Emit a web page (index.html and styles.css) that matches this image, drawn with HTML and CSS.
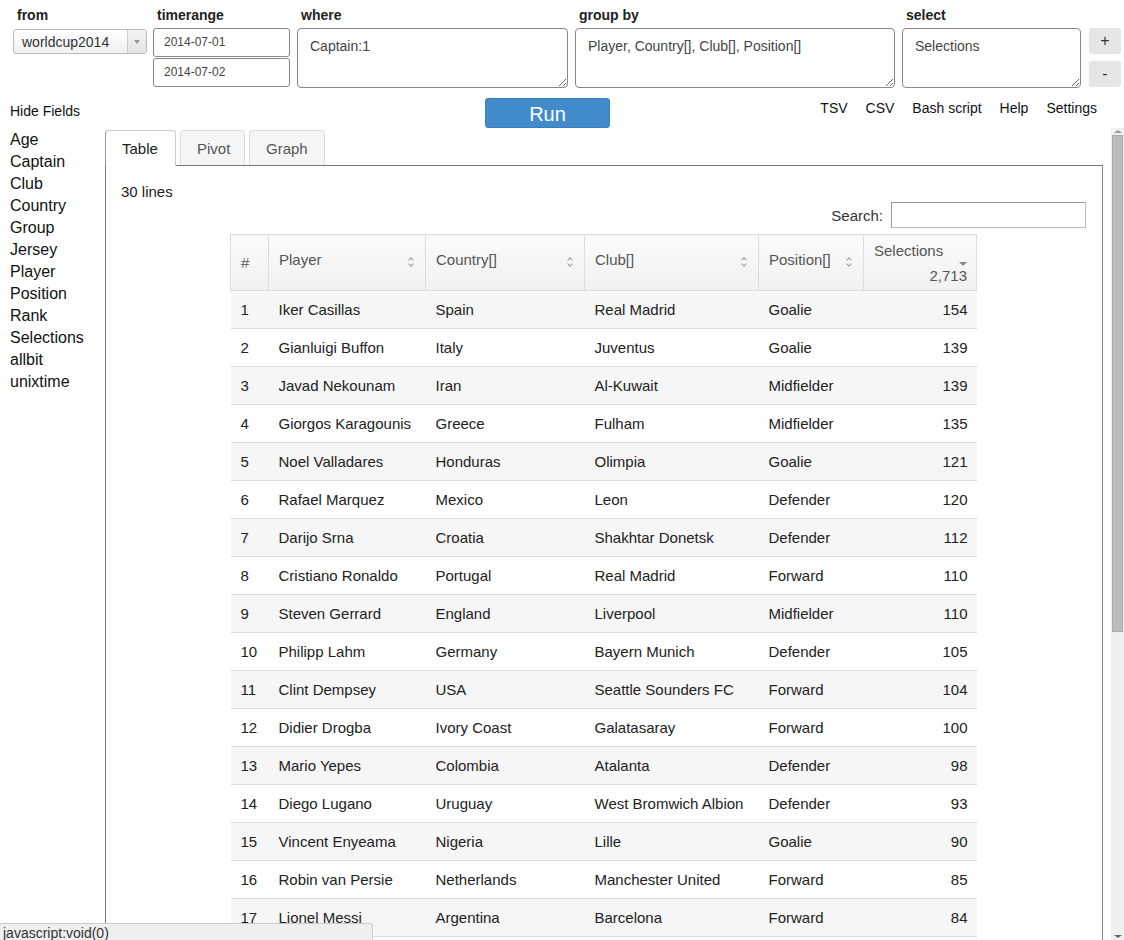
FILE: index.html
```html
<!DOCTYPE html>
<html>
<head>
<meta charset="utf-8">
<link rel="stylesheet" href="styles.css">
</head>
<body>
<div class="query">
  <div class="field f-from">
    <div class="lbl">from</div>
    <div class="select-box"><span class="sel-text">worldcup2014</span><span class="sel-arrow"><i></i></span></div>
  </div>
  <div class="field f-time">
    <div class="lbl">timerange</div>
    <div class="date">2014-07-01</div>
    <div class="date">2014-07-02</div>
  </div>
  <div class="field f-where">
    <div class="lbl">where</div>
    <textarea class="ta">Captain:1</textarea>
  </div>
  <div class="field f-group">
    <div class="lbl">group by</div>
    <textarea class="ta">Player, Country[], Club[], Position[]</textarea>
  </div>
  <div class="field f-select">
    <div class="lbl">select</div>
    <textarea class="ta">Selections</textarea>
  </div>
  <div class="pm">
    <div class="pmbtn">+</div>
    <div class="pmbtn">-</div>
  </div>
</div>

<div class="bar">
  <div class="hide">Hide Fields</div>
  <div class="run">Run</div>
  <div class="links">
    <span>TSV</span><span>CSV</span><span>Bash script</span><span>Help</span><span>Settings</span>
  </div>
</div>

<div class="main">
  <ul class="fields">
    <li>Age</li><li>Captain</li><li>Club</li><li>Country</li><li>Group</li><li>Jersey</li><li>Player</li><li>Position</li><li>Rank</li><li>Selections</li><li>allbit</li><li>unixtime</li>
  </ul>
  <div class="scrollarea">
    <div class="content">
      <div class="tabs">
        <div class="tab active">Table</div>
        <div class="tab">Pivot</div>
        <div class="tab">Graph</div>
      </div>
      <div class="panel">
        <div class="lines">30 lines</div>
        <div class="search"><span>Search:</span><div class="sinput"></div></div>
        <table class="grid">
          <colgroup>
            <col style="width:38px"><col style="width:157px"><col style="width:159px"><col style="width:174px"><col style="width:105px"><col style="width:113px">
          </colgroup>
          <thead>
            <tr>
              <th class="num">#</th>
              <th><div class="th">Player<span class="sort"></span></div></th>
              <th><div class="th">Country[]<span class="sort"></span></div></th>
              <th><div class="th">Club[]<span class="sort"></span></div></th>
              <th><div class="th">Position[]<span class="sort"></span></div></th>
              <th class="selth"><div class="sel-name">Selections</div><span class="desc"></span><div class="total">2,713</div></th>
            </tr>
          </thead>
          <tbody>
            <tr><td>1</td><td>Iker Casillas</td><td>Spain</td><td>Real Madrid</td><td>Goalie</td><td class="r">154</td></tr>
            <tr><td>2</td><td>Gianluigi Buffon</td><td>Italy</td><td>Juventus</td><td>Goalie</td><td class="r">139</td></tr>
            <tr><td>3</td><td>Javad Nekounam</td><td>Iran</td><td>Al-Kuwait</td><td>Midfielder</td><td class="r">139</td></tr>
            <tr><td>4</td><td>Giorgos Karagounis</td><td>Greece</td><td>Fulham</td><td>Midfielder</td><td class="r">135</td></tr>
            <tr><td>5</td><td>Noel Valladares</td><td>Honduras</td><td>Olimpia</td><td>Goalie</td><td class="r">121</td></tr>
            <tr><td>6</td><td>Rafael Marquez</td><td>Mexico</td><td>Leon</td><td>Defender</td><td class="r">120</td></tr>
            <tr><td>7</td><td>Darijo Srna</td><td>Croatia</td><td>Shakhtar Donetsk</td><td>Defender</td><td class="r">112</td></tr>
            <tr><td>8</td><td>Cristiano Ronaldo</td><td>Portugal</td><td>Real Madrid</td><td>Forward</td><td class="r">110</td></tr>
            <tr><td>9</td><td>Steven Gerrard</td><td>England</td><td>Liverpool</td><td>Midfielder</td><td class="r">110</td></tr>
            <tr><td>10</td><td>Philipp Lahm</td><td>Germany</td><td>Bayern Munich</td><td>Defender</td><td class="r">105</td></tr>
            <tr><td>11</td><td>Clint Dempsey</td><td>USA</td><td>Seattle Sounders FC</td><td>Forward</td><td class="r">104</td></tr>
            <tr><td>12</td><td>Didier Drogba</td><td>Ivory Coast</td><td>Galatasaray</td><td>Forward</td><td class="r">100</td></tr>
            <tr><td>13</td><td>Mario Yepes</td><td>Colombia</td><td>Atalanta</td><td>Defender</td><td class="r">98</td></tr>
            <tr><td>14</td><td>Diego Lugano</td><td>Uruguay</td><td>West Bromwich Albion</td><td>Defender</td><td class="r">93</td></tr>
            <tr><td>15</td><td>Vincent Enyeama</td><td>Nigeria</td><td>Lille</td><td>Goalie</td><td class="r">90</td></tr>
            <tr><td>16</td><td>Robin van Persie</td><td>Netherlands</td><td>Manchester United</td><td>Forward</td><td class="r">85</td></tr>
            <tr><td>17</td><td>Lionel Messi</td><td>Argentina</td><td>Barcelona</td><td>Forward</td><td class="r">84</td></tr>
            <tr><td>&nbsp;</td><td></td><td></td><td></td><td></td><td class="r"></td></tr>
          </tbody>
        </table>
      </div>
    </div>
    <div class="vscroll">
      <div class="arrow up"></div>
      <div class="thumb"></div>
      <div class="track"></div>
      <div class="arrow down"></div>
    </div>
  </div>
</div>

<div class="status">javascript:void(0)</div>
</body>
</html>
```

FILE: styles.css
```css
* { box-sizing: border-box; }
html, body { margin: 0; padding: 0; height: 100%; overflow: hidden; }
body {
  font-family: "Liberation Sans", Arial, sans-serif;
  font-size: 14px;
  color: #222;
  background: #fff;
  width: 1124px;
  height: 940px;
}

/* top query row */
.query {
  display: flex;
  align-items: flex-start;
  padding: 6px 0 0 13px;
  height: 98px;
}
.field { display: flex; flex-direction: column; }
.lbl {
  font-weight: bold;
  font-size: 14px;
  color: #222;
  height: 22px;
  line-height: 18px;
  padding-left: 4px;
}
.f-from { width: 134px; margin-right: 6px; }
.f-time { width: 137px; margin-right: 7px; }
.f-where { width: 271px; margin-right: 7px; }
.f-group { width: 320px; margin-right: 7px; }
.f-select { width: 179px; margin-right: 8px; }

.select-box {
  margin-top: 1px;
  height: 25px;
  border: 1px solid #bbb;
  border-radius: 3px;
  background: linear-gradient(#ffffff, #f0f0f0);
  display: flex;
  align-items: center;
}
.sel-text { flex: 1; padding-left: 8px; color: #333; font-size: 14px; }
.sel-arrow {
  width: 19px;
  height: 100%;
  border-left: 1px solid #ccc;
  display: flex;
  align-items: center;
  justify-content: center;
  background: linear-gradient(#f4f4f4, #e4e4e4);
  border-radius: 0 3px 3px 0;
}
.sel-arrow i {
  width: 0; height: 0;
  border-left: 3px solid transparent;
  border-right: 3px solid transparent;
  border-top: 4px solid #999;
}
.date {
  height: 29px;
  border: 1px solid #888;
  border-radius: 3px;
  font-size: 12px;
  color: #444;
  padding-left: 10px;
  line-height: 27px;
  margin-bottom: 1px;
}
.ta {
  display: block;
  width: 100%;
  height: 60px;
  border: 1px solid #888;
  border-radius: 4px;
  font-family: "Liberation Sans", Arial, sans-serif;
  font-size: 14px;
  color: #444;
  padding: 9px 12px;
  resize: vertical;
  outline: none;
  margin: 0;
}
.pm { display: flex; flex-direction: column; padding-top: 22px; gap: 7px; }
.pmbtn {
  width: 32px;
  height: 26px;
  background: #e6e6e6;
  border-radius: 3px;
  text-align: center;
  line-height: 26px;
  font-size: 16px;
  color: #333;
}

/* second bar */
.bar {
  display: flex;
  align-items: center;
  height: 30px;
}
.hide { width: 485px; padding-left: 10px; font-size: 14px; color: #111; padding-bottom: 4px; }
.run {
  width: 125px;
  height: 30px;
  background: #428bca;
  border: 1px solid #3a7fbd;
  border-radius: 3px;
  color: #fff;
  font-size: 20px;
  text-align: center;
  line-height: 30px;
}
.links {
  margin-left: auto;
  display: flex;
  gap: 18px;
  padding-right: 27px;
  color: #111;
  font-size: 14px;
  padding-bottom: 10px;
}

/* main */
.main {
  display: flex;
  height: 812px;
}
.fields {
  list-style: none;
  margin: 0;
  padding: 1px 0 0 10px;
  width: 105px;
  font-size: 16px;
  line-height: 22px;
  color: #111;
}
.scrollarea {
  flex: 1;
  display: flex;
  overflow: hidden;
}
.content {
  flex: 1;
  overflow: hidden;
  padding-top: 2px;
  padding-right: 8px;
}
.tabs { display: flex; gap: 4px; height: 35px; }
.tab {
  height: 35px;
  padding: 0 16px;
  border: 1px solid #ddd;
  border-bottom: none;
  border-radius: 4px 4px 0 0;
  background: #f5f5f5;
  font-size: 15px;
  color: #555;
  line-height: 36px;
}
.tab.active {
  background: #fff;
  border-color: #ccc;
  color: #222;
  height: 36px;
  position: relative;
  z-index: 1;
  border-left-color: #999;
  width: 71px;
}
.tab:nth-child(2) { width: 65px; }
.tab:nth-child(3) { width: 76px; }
.panel {
  border: 1px solid #777;
  border-bottom: none;
  border-right-color: #888;
  height: 900px;
  padding: 17px 16px 0 15px;
}
.lines { font-size: 15px; color: #222; line-height: 18px; }
.search {
  display: flex;
  justify-content: flex-end;
  align-items: center;
  gap: 8px;
  margin-top: 1px;
  color: #333;
  font-size: 15px;
}
.sinput {
  width: 195px;
  height: 26px;
  border: 1px solid #bbb;
  border-top-color: #999;
  border-left-color: #999;
  background: #fff;
}
.grid {
  margin: 6px auto 0;
  width: 746px;
  border-collapse: collapse;
  table-layout: fixed;
  font-size: 15px;
}
.grid th {
  height: 56px;
  border: 1px solid #ddd;
  background: linear-gradient(#fbfbfb, #f1f1f1);
  font-weight: normal;
  color: #555;
  text-align: left;
  padding: 0 10px 6px;
  vertical-align: middle;
}
.grid th.num { padding: 0 0 0 10px; color: #666; }
.th {
  display: flex;
  justify-content: space-between;
  align-items: center;
}
.sort {
  display: inline-block;
  width: 7px;
  height: 9px;
  position: relative;
  margin-top: 4px;
}
.sort::before, .sort::after {
  content: "";
  position: absolute;
  left: 1px;
  width: 3px;
  height: 3px;
  border-left: 1px solid #999;
  border-top: 1px solid #999;
}
.sort::before { top: 1px; transform: rotate(45deg); }
.sort::after { top: 5px; transform: rotate(225deg); }
.grid th.selth { position: relative; text-align: right; padding: 7px 9px 0 10px; vertical-align: top; }
.sel-name { text-align: left; line-height: 18px; }
.desc {
  position: absolute;
  right: 9px;
  top: 27px;
  width: 0; height: 0;
  border-left: 4px solid transparent;
  border-right: 4px solid transparent;
  border-top: 4px solid #888;
}
.total { line-height: 18px; margin-top: 7px; }
.grid td {
  height: 38px;
  padding: 0 10px;
  border-top: 1px solid #ddd;
  color: #222;
  white-space: nowrap;
}
.grid tbody tr:nth-child(odd) td { background: #f6f6f6; }
.grid td.r { text-align: right; padding-right: 9px; }

/* fake scrollbar */
.vscroll {
  width: 13px;
  background: #f0f0f0;
  display: flex;
  flex-direction: column;
  align-items: center;
}
.arrow { width: 0; height: 0; border-left: 4px solid transparent; border-right: 4px solid transparent; }
.arrow.up { border-bottom: 3px solid #999; margin: 2px 0 2px; }
.arrow.down { border-top: 3px solid #666; margin: 0 0 2px; }
.thumb {
  width: 11px;
  height: 497px;
  background: #bcbcbc;
  border: 1px solid #aaa;
}
.track { flex: 1; }

/* status bar */
.status {
  position: fixed;
  left: 0;
  bottom: 0;
  width: 373px;
  height: 17px;
  background: #efefef;
  border-top: 1px solid #ccc;
  border-right: 1px solid #ccc;
  border-radius: 0 3px 0 0;
  font-size: 14px;
  color: #333;
  line-height: 18px;
  padding-left: 3px;
  overflow: hidden;
}
```
